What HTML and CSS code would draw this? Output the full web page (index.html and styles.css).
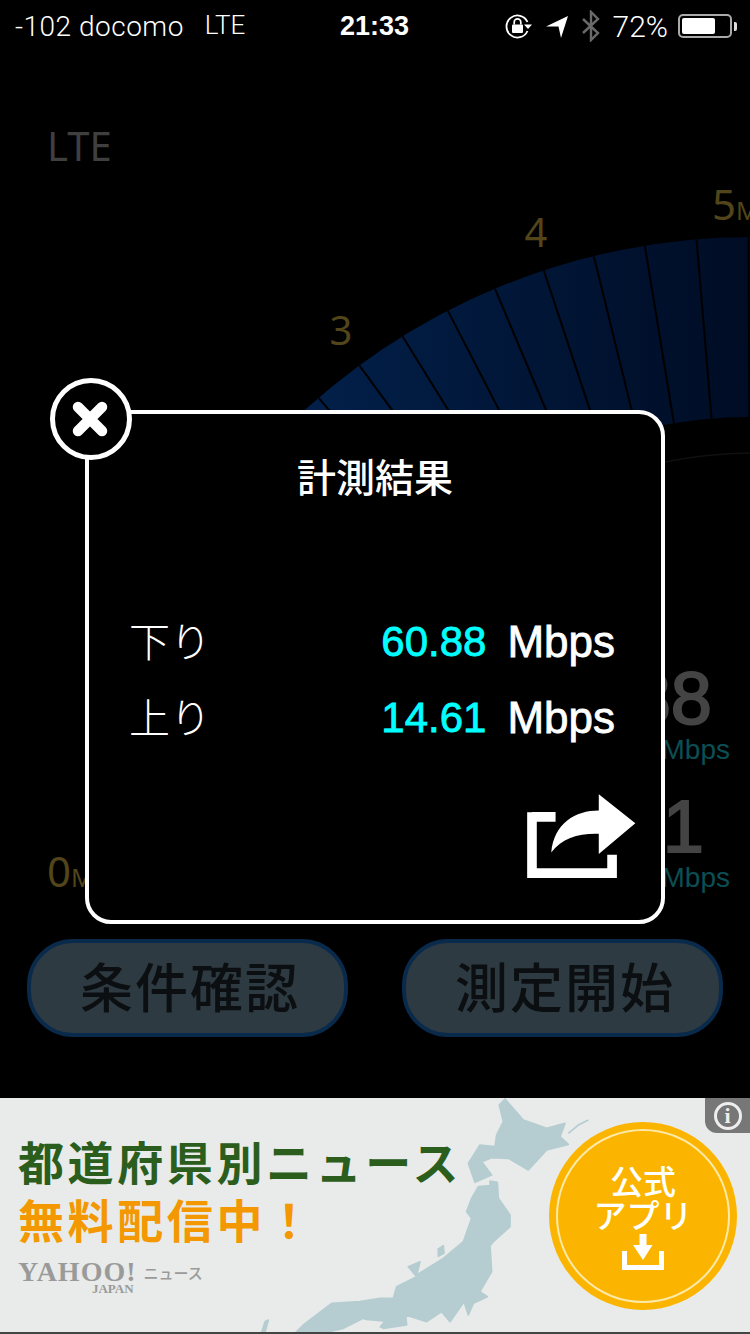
FILE: index.html
```html
<!DOCTYPE html>
<html lang="ja">
<head>
    <meta charset="UTF-8">
    <meta name="viewport" content="width=device-width, initial-scale=1.0">
    <title>計測結果</title>
    <link rel="stylesheet" href="styles.css">
</head>
<body>
<div class="phone">
    <!-- gauge behind everything, drawn in page coordinates -->
    <svg class="gauge" viewBox="0 0 750 1098" width="750" height="1098">
        <defs>
            <linearGradient id="band" x1="305" y1="0" x2="750" y2="0" gradientUnits="userSpaceOnUse">
                <stop offset="0" stop-color="#02204a"/>
                <stop offset="1" stop-color="#000c24"/>
            </linearGradient>
        </defs>
        <path d="M283 431 A663 663 0 0 1 752 237 L752 417 A483 483 0 0 0 410 558 Z" fill="url(#band)"/>
        <path d="M665 462 A447 447 0 0 1 750 453" fill="none" stroke="#101010" stroke-width="1.5"/>
        <g class="ticks">
            <line x1="752" y1="237" x2="752" y2="417" transform="rotate(-0.3 752 900)"/>
            <line x1="752" y1="237" x2="752" y2="417" transform="rotate(-4.8 752 900)"/>
            <line x1="752" y1="237" x2="752" y2="417" transform="rotate(-9.3 752 900)"/>
            <line x1="752" y1="237" x2="752" y2="417" transform="rotate(-13.8 752 900)"/>
            <line x1="752" y1="237" x2="752" y2="417" transform="rotate(-18.3 752 900)"/>
            <line x1="752" y1="237" x2="752" y2="417" transform="rotate(-22.8 752 900)"/>
            <line x1="752" y1="237" x2="752" y2="417" transform="rotate(-27.3 752 900)"/>
            <line x1="752" y1="237" x2="752" y2="417" transform="rotate(-31.8 752 900)"/>
            <line x1="752" y1="237" x2="752" y2="417" transform="rotate(-36.3 752 900)"/>
            <line x1="752" y1="237" x2="752" y2="417" transform="rotate(-40.8 752 900)"/>
        </g>
        <g class="gauge-labels">
            <text x="341" y="345" text-anchor="middle">3</text>
            <text x="536" y="247" text-anchor="middle">4</text>
            <text class="end-label" x="712" y="220">5<tspan class="unit-m">M</tspan></text>
            <text class="end-label" x="47" y="887">0<tspan class="unit-m">M</tspan></text>
        </g>
    </svg>

    <div class="status-bar">
        <div class="status-left">
            <span>-102 docomo</span>
            <span class="network">LTE</span>
        </div>
        <div class="status-time">21:33</div>
        <div class="status-right">
            <svg class="ic-lock" width="30" height="30" viewBox="0 0 30 30">
                <path d="M24.5 11 A11 11 0 1 0 24.5 20" fill="none" stroke="#fff" stroke-width="1.8"/>
                <path d="M21 13.5 h8 l-4 4.5 Z" fill="#fff"/>
                <rect x="9" y="13.5" width="11" height="8.5" rx="1" fill="#fff"/>
                <path d="M11.2 13.5 v-2.4 a3.3 3.3 0 0 1 6.6 0 v2.4" fill="none" stroke="#fff" stroke-width="1.7"/>
            </svg>
            <svg class="ic-arrow" width="24" height="24" viewBox="0 0 24 24">
                <path d="M1 12.5 L23 2 L16 24 L13.5 12.5 Z" fill="#fff"/>
            </svg>
            <svg class="ic-bt" width="20" height="32" viewBox="0 0 20 32">
                <path d="M2 9 L17 23 L10 30 V2 L17 9 L2 23" fill="none" stroke="#6a6a6a" stroke-width="2.4"/>
            </svg>
            <span class="battery-text">72%</span>
            <div class="battery"><div class="battery-level"></div></div>
            <div class="battery-nub"></div>
        </div>
    </div>

    <div class="screen">
        <div class="network-label">LTE</div>
        <div class="readings">
            <div class="reading-value">60.88</div>
            <div class="reading-unit">Mbps</div>
            <div class="reading-value second">14.61</div>
            <div class="reading-unit">Mbps</div>
        </div>
        <div class="buttons">
            <div class="btn">条件確認</div>
            <div class="btn">測定開始</div>
        </div>
    </div>

    <div class="ad">
        <svg class="ad-map" viewBox="0 0 990 717" width="330" height="239">
            <g class="land">
                <path d="M735 12 L790 75 L860 100 L915 85 L900 125 L925 148 L860 165 L805 225 L745 190 L695 188 L665 200 L695 240 L645 262 L625 205 L660 150 L705 155 L710 120 L730 80 L718 30 Z"/>
                <path d="M655 275 L690 272 L690 258 L712 262 L715 310 L750 360 L750 395 L700 440 L690 452 L695 530 L660 590 L682 605 L640 625 L625 660 L612 620 L570 680 L545 650 L500 680 L437 660 L440 690 L370 700 L310 670 L250 700 L200 712 L108 712 L130 690 L215 625 L300 620 L360 610 L400 610 L410 575 L470 545 L445 515 L480 500 L470 540 L550 490 L610 440 L635 370 L620 350 L635 310 Z"/>
                <path d="M535 462 L550 452 L552 475 L535 484 Z"/>
                <path d="M15 680 L25 675 L15 712 L5 712 Z"/>
            </g>
            <path d="M925 115 L955 90 L985 75" fill="none" stroke="#b5cdd1" stroke-width="5"/>
            <path d="M270 712 L310 675 L370 680 L345 712 Z" fill="#e8ebe9"/>
        </svg>
        <div class="ad-copy">
            <div class="ad-line green">都道府県別ニュース</div>
            <div class="ad-line orange">無料配信中！</div>
            <div class="ad-brand">
                <div class="yahoo">
                    <span class="yahoo-name">YAHOO!</span>
                    <span class="yahoo-japan">JAPAN</span>
                </div>
                <span class="brand-news">ニュース</span>
            </div>
        </div>
        <div class="info-tab">
            <div class="info-icon">i</div>
        </div>
        <div class="cta">
            <div class="cta-ring">
                <div class="cta-text">公式</div>
                <div class="cta-text">アプリ</div>
                <svg class="cta-icon" width="42" height="36" viewBox="0 0 42 36">
                    <path d="M17.5 0 h7 v11 h6 L21 26 L11 11 h6.5 Z" fill="#fff"/>
                    <path d="M2.5 17 V33.5 H39.5 V17" fill="none" stroke="#fff" stroke-width="5"/>
                </svg>
            </div>
        </div>
    </div>

    <!-- result dialog -->
    <div class="modal">
        <div class="modal-title">計測結果</div>
        <div class="result-row">
            <span class="result-label">下り</span>
            <span class="result-value">60.88</span>
            <span class="result-unit">Mbps</span>
        </div>
        <div class="result-row">
            <span class="result-label">上り</span>
            <span class="result-value">14.61</span>
            <span class="result-unit">Mbps</span>
        </div>
        <svg class="share" viewBox="70 400 340 260" width="113" height="87">
            <path d="M94 471 H165 M94 457 V640 H335 V585" fill="none" stroke="#fff" stroke-width="29"/>
            <path d="M405 490 L295 403 V452 C225 452 160 490 152 578 C185 535 235 520 295 522 V583 Z" fill="#fff"/>
        </svg>
    </div>
    <div class="close-btn">
        <svg width="72" height="72" viewBox="0 0 72 72">
            <path d="M23 24 L47 48 M47 24 L23 48" stroke="#fff" stroke-width="10.5" stroke-linecap="round"/>
        </svg>
    </div>
</div>
</body>
</html>
```

FILE: styles.css
```css
* {
    margin: 0;
    padding: 0;
    box-sizing: border-box;
}

body {
    background: #000;
    font-family: "Liberation Sans", "Noto Sans CJK JP", sans-serif;
    overflow: hidden;
}

.phone {
    position: relative;
    width: 750px;
    height: 1334px;
    display: flex;
    flex-direction: column;
    background: #000;
}

/* gauge */
.gauge {
    position: absolute;
    top: 0;
    left: 0;
}

.ticks line {
    stroke: #000;
    stroke-width: 2;
}

.gauge-labels text {
    font-family: "Noto Sans", sans-serif;
    font-size: 40px;
    fill: #52451a;
}

.gauge-labels .end-label {
    font-family: "Liberation Sans Narrow", "Noto Sans", sans-serif;
    font-size: 42px;
}

.gauge-labels .unit-m {
    font-size: 25px;
}

/* status bar */
.status-bar {
    position: relative;
    height: 52px;
    display: grid;
    grid-template-columns: 1fr auto 1fr;
    align-items: center;
    padding: 0 13px 0 12px;
    color: #fff;
    font-family: Roboto, "Liberation Sans", sans-serif;
    font-weight: 300;
    font-size: 28px;
}

.status-left {
    display: flex;
    gap: 21px;
    margin-left: 3px;
    letter-spacing: 0.5px;
}

.network {
    font-size: 26px;
    letter-spacing: 0;
}

.status-time {
    font-family: "Liberation Sans", sans-serif;
    font-weight: 700;
    font-size: 27px;
}

.status-right {
    display: flex;
    align-items: center;
    justify-content: flex-end;
}

.ic-arrow {
    margin-left: 12px;
}

.ic-bt {
    margin-left: 12px;
}

.battery-text {
    margin-left: 12px;
    font-size: 30px;
}

.battery {
    width: 54px;
    height: 24px;
    margin-left: 10px;
    padding: 2px;
    border: 2px solid #aaa;
    border-radius: 5px;
}

.battery-level {
    width: 72%;
    height: 100%;
    background: #fff;
    border-radius: 2px;
}

.battery-nub {
    width: 3px;
    height: 9px;
    margin-left: 2px;
    background: #ddd;
    border-radius: 0 2px 2px 0;
}

/* dimmed screen under the dialog */
.screen {
    position: relative;
    flex: 1;
    display: flex;
    flex-direction: column;
    padding: 71px 27px 61px;
}

.network-label {
    margin-left: 20px;
    font-family: "Noto Sans", sans-serif;
    font-size: 40px;
    line-height: 46px;
    color: #3f3f3f;
}

.readings {
    margin-top: auto;
    margin-bottom: 45px;
    margin-right: -7px;
    align-self: flex-end;
    text-align: right;
}

.reading-value {
    padding-right: 18px;
    font-size: 74px;
    line-height: 71px;
    color: #444;
    -webkit-text-stroke: 2px #444;
}

.reading-value.second {
    margin-top: 25px;
    padding-right: 26px;
}

.reading-unit {
    font-size: 28px;
    line-height: 32px;
    color: #0b4f55;
}

.buttons {
    display: flex;
    justify-content: space-between;
}

.btn {
    width: 321px;
    height: 98px;
    display: flex;
    align-items: center;
    justify-content: center;
    padding: 0 0 6px 5px;
    background: #2e3a41;
    border: 4px solid #0a2a4c;
    border-radius: 46px;
    font-family: "Noto Sans CJK JP", sans-serif;
    font-weight: 500;
    font-size: 53px;
    letter-spacing: 2px;
    color: #0c0f11;
}

/* dialog */
.modal {
    position: absolute;
    top: 410px;
    left: 85px;
    width: 580px;
    height: 514px;
    display: flex;
    flex-direction: column;
    padding: 37px 24px 40px 40px;
    background: #000;
    border: 4px solid #fff;
    border-radius: 26px;
    color: #fff;
}

.modal-title {
    margin-left: -16px;
    margin-bottom: 105px;
    text-align: center;
    font-family: "Noto Sans CJK JP", sans-serif;
    font-weight: 500;
    font-size: 39px;
    line-height: 48px;
}

.result-row {
    height: 76px;
    display: flex;
    align-items: center;
    padding-right: 22px;
}

.result-label {
    padding-bottom: 6px;
    font-family: "Noto Sans CJK JP", sans-serif;
    font-weight: 300;
    font-size: 41px;
}

.result-value {
    margin-left: auto;
    font-size: 42px;
    color: #00ffff;
    -webkit-text-stroke: 0.8px #00ffff;
}

.result-unit {
    margin-left: 21px;
    font-size: 44px;
    -webkit-text-stroke: 0.8px #fff;
}

.share {
    margin-top: auto;
    align-self: flex-end;
}

.close-btn {
    position: absolute;
    top: 378px;
    left: 50px;
    width: 82px;
    height: 82px;
    display: flex;
    align-items: center;
    justify-content: center;
    background: #000;
    border: 5px solid #fff;
    border-radius: 50%;
}

/* ad banner */
.ad {
    position: relative;
    height: 236px;
    background: #e8ebe9;
    border-bottom: 2px solid #444;
    overflow: hidden;
}

.ad-map {
    position: absolute;
    top: -3px;
    left: 260px;
}

.land path {
    fill: #b5cdd1;
    stroke: #b5cdd1;
    stroke-width: 5;
    stroke-linejoin: round;
}

.ad-copy {
    position: relative;
    padding: 33px 0 0 18px;
    font-family: "Noto Sans CJK JP", sans-serif;
    font-weight: 700;
}

.ad-line {
    font-size: 46px;
    letter-spacing: 3.6px;
    line-height: 58px;
    white-space: nowrap;
}

.green {
    color: #2b5e1d;
}

.orange {
    color: #f39800;
}

.ad-brand {
    display: flex;
    align-items: flex-start;
    margin-top: 14px;
    color: #9a9a9a;
}

.yahoo {
    display: flex;
    flex-direction: column;
    align-items: flex-end;
}

.yahoo-name {
    font-family: "Liberation Serif", serif;
    font-weight: 700;
    font-size: 28px;
    line-height: 22px;
    letter-spacing: 1px;
}

.yahoo-japan {
    margin-right: 3px;
    font-family: "Liberation Serif", serif;
    font-weight: 700;
    font-size: 13px;
    line-height: 12px;
}

.brand-news {
    margin-left: 7px;
    font-size: 15px;
    line-height: 24px;
    font-weight: 500;
}

.info-tab {
    position: absolute;
    top: 0;
    right: 0;
    width: 45px;
    height: 35px;
    display: flex;
    align-items: center;
    justify-content: center;
    background: #777;
    border-bottom-left-radius: 12px;
}

.info-icon {
    width: 28px;
    height: 28px;
    display: flex;
    align-items: center;
    justify-content: center;
    border: 3px solid #eee;
    border-radius: 50%;
    font-family: "Liberation Serif", serif;
    font-weight: 700;
    font-size: 22px;
    color: #eee;
}

.cta {
    position: absolute;
    top: 24px;
    left: 549px;
    width: 188px;
    height: 188px;
    padding: 7px;
    background: #fbb500;
    border-radius: 50%;
}

.cta-ring {
    width: 100%;
    height: 100%;
    display: flex;
    flex-direction: column;
    align-items: center;
    padding-top: 32px;
    border: 2px solid #fde9a8;
    border-radius: 50%;
    color: #fff;
    font-family: "Noto Sans CJK JP", sans-serif;
    font-weight: 500;
}

.cta-text {
    font-size: 33px;
    line-height: 34px;
}

.cta-icon {
    margin-top: 3px;
}
```
